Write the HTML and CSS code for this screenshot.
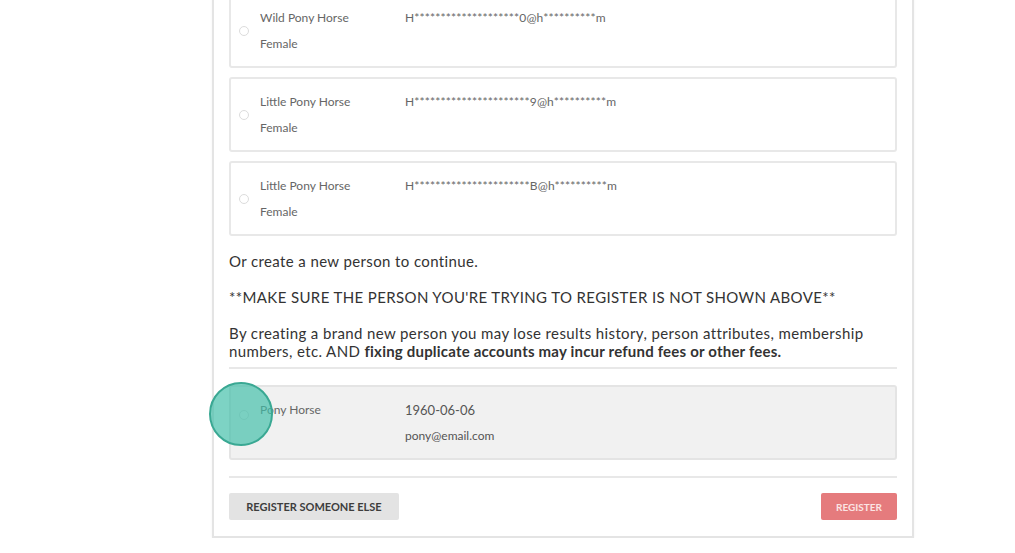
FILE: index.html
```html
<!DOCTYPE html>
<html>
<head>
<meta charset="utf-8">
<link rel="stylesheet" href="styles.css">
</head>
<body>
<div class="panel">
  <div class="card">
    <span class="radio"></span>
    <div class="info">
      <span class="name">Wild Pony Horse</span>
      <span class="email">H********************0@h**********m</span>
      <span class="sub">Female</span>
    </div>
  </div>
  <div class="card">
    <span class="radio"></span>
    <div class="info">
      <span class="name">Little Pony Horse</span>
      <span class="email">H**********************9@h**********m</span>
      <span class="sub">Female</span>
    </div>
  </div>
  <div class="card">
    <span class="radio"></span>
    <div class="info">
      <span class="name">Little Pony Horse</span>
      <span class="email">H**********************B@h**********m</span>
      <span class="sub">Female</span>
    </div>
  </div>

  <p class="text first">Or create a new person to continue.</p>
  <p class="text">**MAKE SURE THE PERSON YOU'RE TRYING TO REGISTER IS NOT SHOWN ABOVE**</p>
  <p class="text"><span>By creating a brand new person you may lose results history, person attributes, membership</span> <span>numbers, etc. AND</span> <b>fixing duplicate accounts may incur refund fees or other fees.</b></p>

  <hr class="rule">

  <div class="card new">
    <span class="radio"></span>
    <div class="info">
      <span class="name">Pony Horse</span>
      <span class="date">1960-06-06</span>
      <span class="sub"></span>
      <span class="mail">pony@email.com</span>
    </div>
    <span class="tap"></span>
  </div>

  <hr class="rule">

  <div class="actions">
    <button class="btn other">REGISTER SOMEONE ELSE</button>
    <button class="btn register">REGISTER</button>
  </div>
</div>
</body>
</html>
```
FILE: styles.css
```css
html, body {
  margin: 0;
  padding: 0;
  background: #ffffff;
}
body {
  font-family: Lato, "Open Sans", sans-serif;
  color: #333;
  overflow: hidden;
}
.panel {
  width: 668px;
  margin: -20px 0 0 212px;
  padding: 13px 15px 16px 15px;
  border: 2px solid #e4e4e4;
  border-top: none;
  box-shadow: 0 0 2px rgba(0,0,0,0.06);
}
.card {
  position: relative;
  box-sizing: border-box;
  height: 75px;
  border: 2px solid #e8e8e8;
  border-radius: 3px;
  display: flex;
  align-items: center;
  padding-left: 8px;
  margin-bottom: 9px;
  background: #fff;
}
.radio {
  width: 10px;
  height: 10px;
  border: 1px solid #dcdcdc;
  border-radius: 50%;
  box-sizing: border-box;
  background: #fff;
  flex: none;
}
.card.new .radio {
  margin-top: -16px;
  background: #f4f4f4;
}
.info {
  display: grid;
  grid-template-columns: 145px auto;
  grid-auto-rows: 18px;
  row-gap: 8px;
  margin-left: 11px;
  align-items: center;
  font-size: 12px;
  color: #666;
}
.email { font-size: 12px; letter-spacing: 0.15px; color: #666; }
.date { font-size: 13px; color: #555; }
.mail { font-size: 12px; color: #555; }
.text {
  margin: 0 0 18px 0;
  font-size: 15px;
  letter-spacing: 0.38px;
  line-height: 18px;
  color: #333;
}
.text.first { margin-top: 16px; }
.text b { font-weight: 700; color: #333; letter-spacing: 0.2px; }
.rule {
  border: none;
  border-top: 2px solid #e8e8e8;
  margin: -11px 0 16px 0;
}
.card.new {
  background: #f1f1f1;
  border-color: #e4e4e4;
  margin-bottom: 16px;
}
.card.new + .rule { margin-top: 0; margin-bottom: 15px; }
.tap {
  position: absolute;
  left: -22px;
  top: -5px;
  width: 60px;
  height: 60px;
  border-radius: 50%;
  background: rgba(64, 190, 168, 0.68);
  border: 2px solid #3aa893;
}
.actions {
  display: flex;
  justify-content: space-between;
}
.btn {
  border: none;
  border-radius: 2px;
  height: 27px;
  font-family: Lato, "Open Sans", sans-serif;
  cursor: pointer;
}
.btn.other {
  width: 170px;
  background: #e3e3e3;
  color: #3d3d3d;
  font-size: 11px;
  font-weight: 700;
}
.btn.register {
  width: 76px;
  background: #e57b7d;
  color: #fbe4e4;
  font-size: 10px;
  font-weight: 700;
}
```
